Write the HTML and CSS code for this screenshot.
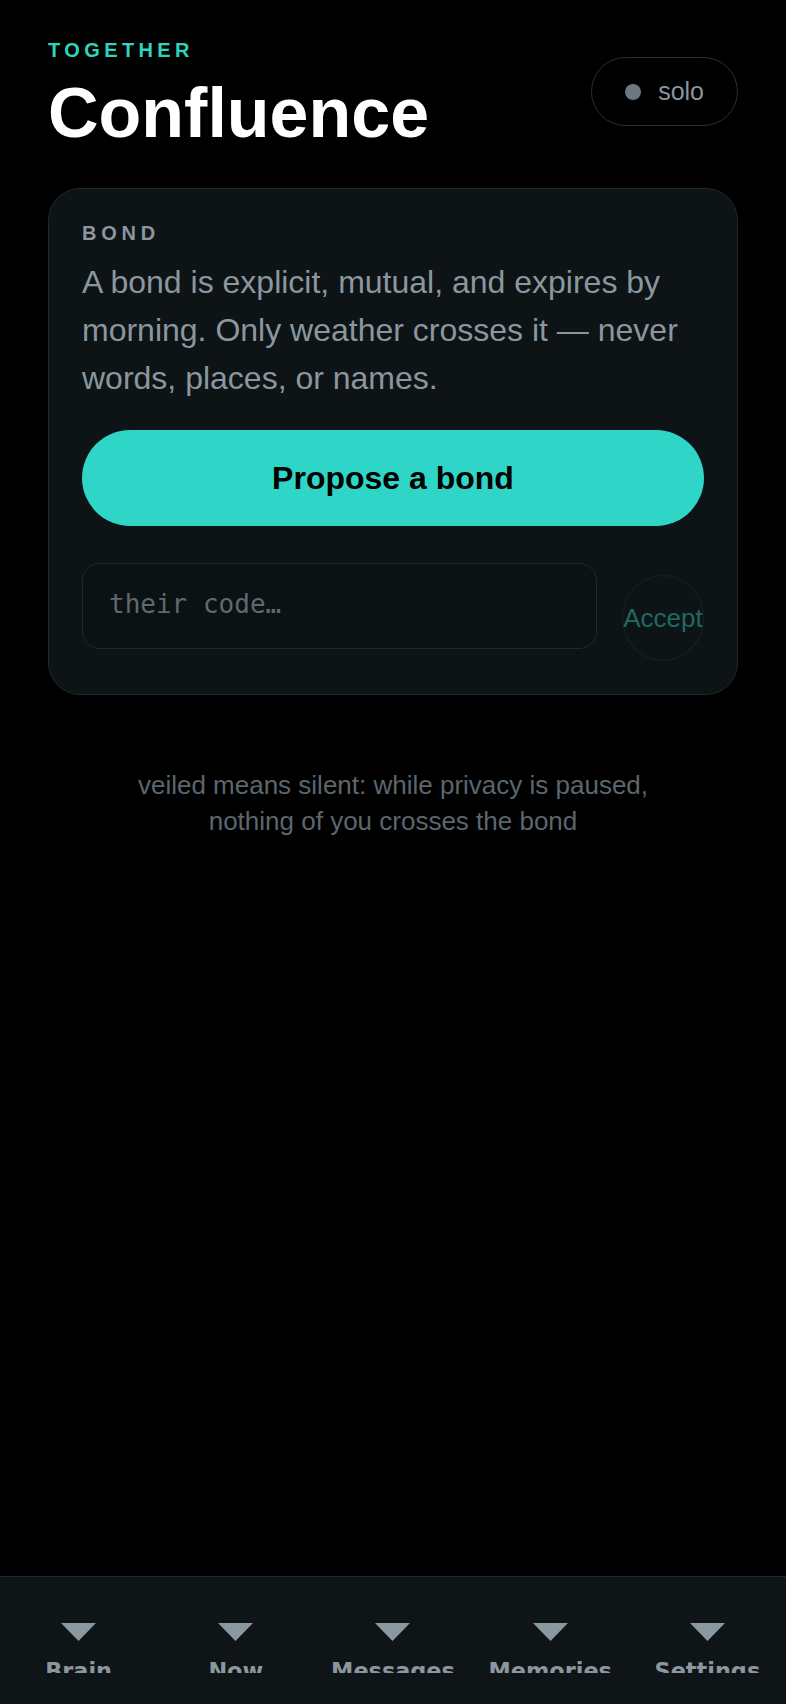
FILE: index.html
```html
<!DOCTYPE html>
<html lang="en">
<head>
<meta charset="UTF-8">
<meta name="viewport" content="width=device-width, initial-scale=1.0">
<title>Confluence</title>
<link rel="stylesheet" href="styles.css">
</head>
<body>

<div class="app">

    <!-- Cabecera -->
    <header class="top">
        <div class="titles">
            <div class="eyebrow">TOGETHER</div>
            <h1>Confluence</h1>
        </div>
        <div class="status-pill"><span class="dot"></span>solo</div>
    </header>

    <!-- Tarjeta del vínculo -->
    <section class="card">
        <div class="card-label">BOND</div>
        <p class="card-text">A bond is explicit, mutual, and expires by morning. Only weather crosses it — never words, places, or names.</p>
        <button class="propose-btn">Propose a bond</button>
        <div class="code-row">
            <input type="text" class="code-input" placeholder="their code…">
            <button class="accept-btn">Accept</button>
        </div>
    </section>

    <p class="note">veiled means silent: while privacy is paused,<br>nothing of you crosses the bond</p>

    <!-- Barra de navegación -->
    <nav class="tabbar">
        <div class="tab">
            <svg class="tab-icon" viewBox="0 0 35 18"><polygon points="0,0 35,0 17.5,18"/></svg>
            <span>Brain</span>
        </div>
        <div class="tab">
            <svg class="tab-icon" viewBox="0 0 35 18"><polygon points="0,0 35,0 17.5,18"/></svg>
            <span>Now</span>
        </div>
        <div class="tab">
            <svg class="tab-icon" viewBox="0 0 35 18"><polygon points="0,0 35,0 17.5,18"/></svg>
            <span>Messages</span>
        </div>
        <div class="tab">
            <svg class="tab-icon" viewBox="0 0 35 18"><polygon points="0,0 35,0 17.5,18"/></svg>
            <span>Memories</span>
        </div>
        <div class="tab">
            <svg class="tab-icon" viewBox="0 0 35 18"><polygon points="0,0 35,0 17.5,18"/></svg>
            <span>Settings</span>
        </div>
    </nav>

</div>

</body>
</html>
```

FILE: styles.css
```css
/* Base */
body {
    margin: 0;
    background: #000;
    font-family: "Liberation Sans", Arial, sans-serif;
    color: #8a979f;
}

.app {
    min-height: 100vh;
    display: flex;
    flex-direction: column;
}

/* Cabecera */
.top {
    display: flex;
    justify-content: space-between;
    align-items: flex-start;
    padding: 39px 48px 0;
}

.eyebrow {
    font-size: 20px;
    font-weight: bold;
    letter-spacing: 4.4px;
    color: #2dd4bf;
    line-height: 23px;
}

.top h1 {
    margin: 13px 0 0;
    font-size: 70px;
    line-height: 77px;
    color: #fff;
}

.status-pill {
    display: flex;
    align-items: center;
    gap: 17px;
    height: 67px;
    padding: 0 33px;
    margin-top: 18px;
    border: 1.5px solid #25313a;
    border-radius: 40px;
    font-size: 25px;
    color: #8a969e;
}

.status-pill .dot {
    width: 16px;
    height: 16px;
    border-radius: 50%;
    background: #6b7883;
}

/* Tarjeta */
.card {
    margin: 36px 48px 0;
    padding: 33px;
    background: #0e1316;
    border: 1px solid #1f292e;
    border-radius: 32px;
}

.card-label {
    font-size: 20px;
    font-weight: bold;
    letter-spacing: 4.8px;
    line-height: 23px;
    color: #8a979f;
}

.card-text {
    margin: 13px 0 0;
    font-size: 32px;
    line-height: 48px;
    color: #8a979f;
}

.propose-btn {
    display: block;
    width: 100%;
    height: 96px;
    margin-top: 28px;
    border: none;
    border-radius: 48px;
    background: #2fd5c6;
    color: #000;
    font-family: "Liberation Sans", Arial, sans-serif;
    font-size: 32px;
    font-weight: bold;
}

.code-row {
    display: flex;
    align-items: flex-start;
    gap: 25px;
    margin-top: 37px;
}

.code-input {
    flex: 1;
    min-width: 0;
    height: 86px;
    box-sizing: border-box;
    padding: 0 26px 5px;
    background: #0c1114;
    border: 1.5px solid #1f292e;
    border-radius: 18px;
    font-family: "DejaVu Sans Mono", monospace;
    font-size: 26px;
    color: #c8d0d4;
    outline: none;
}

.code-input::placeholder {
    color: #5e6a71;
}

.accept-btn {
    width: 82px;
    height: 86px;
    margin-top: 12px;
    padding: 0;
    background: transparent;
    border: 1px solid #182125;
    border-radius: 50%;
    color: #1e6a62;
    font-family: "Liberation Sans", Arial, sans-serif;
    font-size: 26px;
    white-space: nowrap;
    display: flex;
    justify-content: center;
    align-items: center;
}

/* Nota inferior */
.note {
    margin: 72px 48px 0;
    text-align: center;
    font-size: 26px;
    line-height: 36px;
    color: #5b666d;
}

/* Barra de pestañas */
.tabbar {
    margin-top: auto;
    display: grid;
    grid-template-columns: repeat(5, 1fr);
    height: 128px;
    box-sizing: border-box;
    padding-top: 46px;
    background: #0f1417;
    border-top: 1px solid #1f2a2f;
}

.tab {
    display: flex;
    flex-direction: column;
    align-items: center;
    height: 50px;
    overflow: hidden;
}

.tab-icon {
    width: 35px;
    height: 18px;
    fill: #8a98a0;
    flex-shrink: 0;
}

.tab span {
    margin-top: 17px;
    font-family: "DejaVu Sans", sans-serif;
    font-weight: bold;
    font-size: 22.4px;
    line-height: 26px;
    color: #8a979f;
}
```
